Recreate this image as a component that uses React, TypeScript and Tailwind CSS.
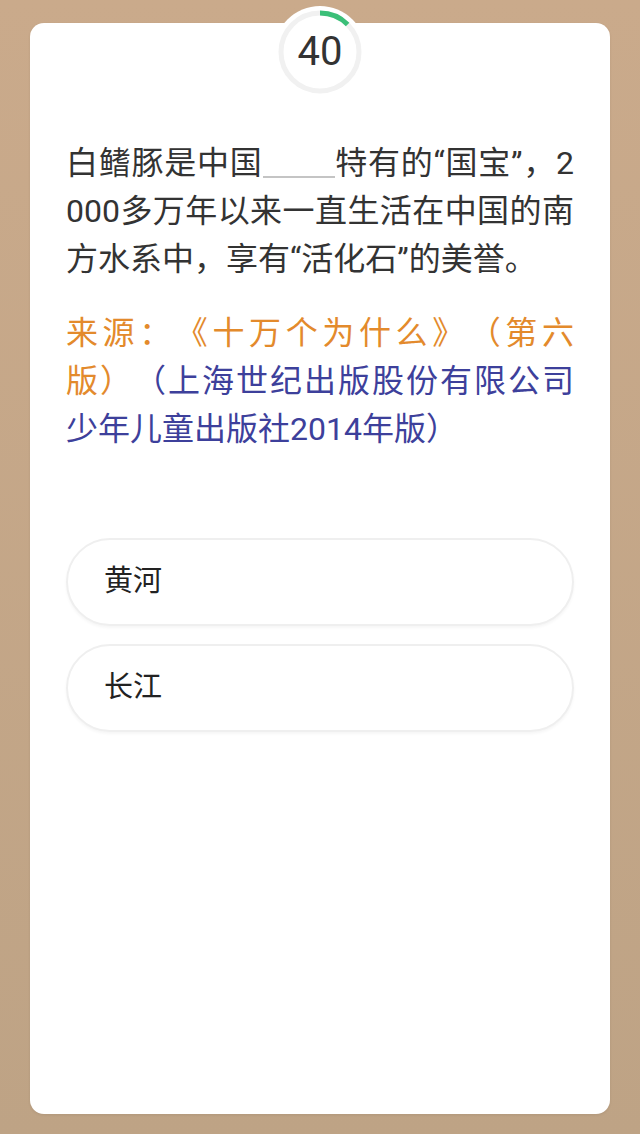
import React from "react";

export default function App() {
  const r = 39;
  const c = 2 * Math.PI * r;
  const frac = 0.125;
  return (
    <div
      className="min-h-[1134px] w-[640px] bg-gradient-to-b from-[#caaa8b] to-[#bea385] pt-[23px] pb-[20px]"
      style={{ fontFamily: 'Roboto, "Noto Sans CJK SC", sans-serif' }}
    >
      <div className="mx-[30px] h-[1091px] rounded-[14px] bg-white px-[36px] shadow-[0_1px_3px_rgba(0,0,0,0.08)] flex flex-col">
        <div className="-mt-[17px] mx-auto w-[92px] h-[92px] rounded-full bg-white relative flex items-center justify-center">
          <svg width="92" height="92" viewBox="0 0 92 92" className="absolute inset-0">
            <circle cx="46" cy="46" r={r} fill="none" stroke="#f1f1f1" strokeWidth="5" />
            <circle
              cx="46"
              cy="46"
              r={r}
              fill="none"
              stroke="#3bbf78"
              strokeWidth="5"
              strokeDasharray={`${c * frac} ${c}`}
              transform="rotate(-90 46 46)"
            />
          </svg>
          <span className="relative text-[40px] leading-none text-[#333] font-normal">40</span>
        </div>

        <p className="mt-[41px] text-[32px] leading-[48px] text-[#333] text-justify break-all [text-spacing-trim:space-all]">
          白鳍豚是中国
          <span className="inline-block w-[72px] h-[30px] border-b-2 border-[#c4c4c4] align-[-4px]"></span>
          特有的“国宝”，2000多万年以来一直生活在中国的南方水系中，享有“活化石”的美誉。
        </p>

        <p className="mt-[26px] text-[32px] leading-[48px] text-justify break-all [text-spacing-trim:space-all]">
          <span className="text-[#e38a2c]">来源：《十万个为什么》（第六版）</span>
          <span className="text-[#3d409b]">（上海世纪出版股份有限公司少年儿童出版社2014年版）</span>
        </p>

        <div className="mt-[85px] flex flex-col gap-[18px]">
          <div className="h-[88px] rounded-full border-2 border-[#efefef] bg-white shadow-[0_2px_3px_rgba(0,0,0,0.04)] flex items-center pl-[36px] text-[29px] text-[#222]">
            黄河
          </div>
          <div className="h-[88px] rounded-full border-2 border-[#efefef] bg-white shadow-[0_2px_3px_rgba(0,0,0,0.04)] flex items-center pl-[36px] text-[29px] text-[#222]">
            长江
          </div>
        </div>
      </div>
    </div>
  );
}
